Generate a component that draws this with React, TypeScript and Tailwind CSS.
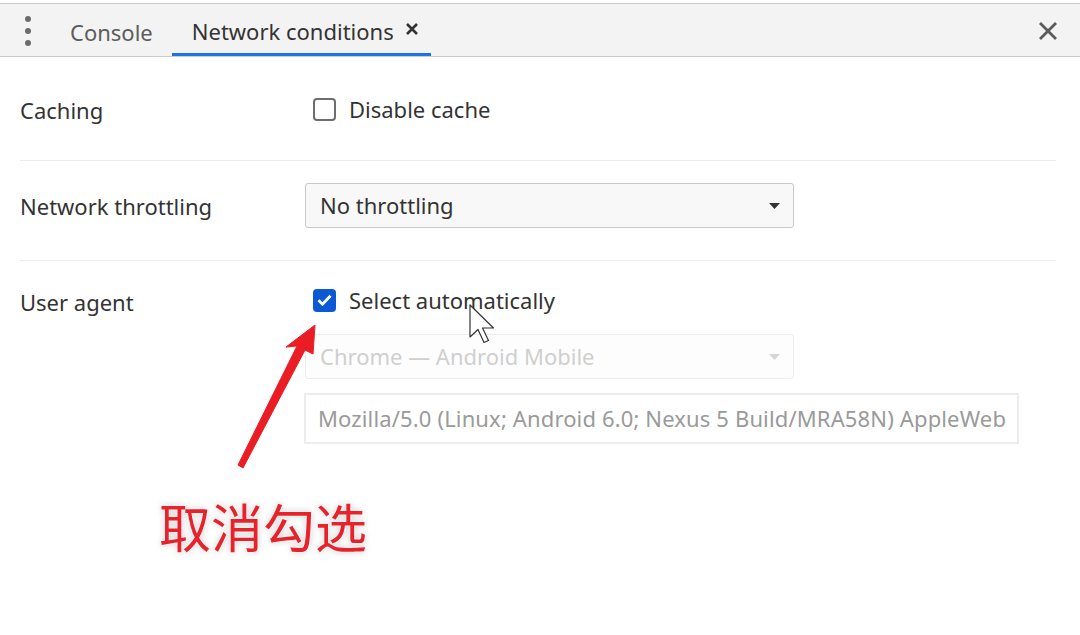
const font = "font-['Noto_Sans','Open_Sans',sans-serif]";

const Caret = ({ light }: { light?: boolean }) => (
  <svg width="11" height="6" viewBox="0 0 11 6" className={light ? 'text-[#d6d6d6]' : 'text-[#333]'}>
    <path d="M0 0h11L5.5 6z" fill="currentColor" />
  </svg>
);

const Toolbar = () => (
  <div className="mt-[3px] h-[54px] border-y border-[#cbcbcb] bg-[#f3f3f3] flex items-stretch">
    <div className="w-[56px] flex flex-col items-center justify-center gap-[6px] pt-[2px]">
      <span className="w-[6px] h-[6px] rounded-full bg-[#6b6b6b]" />
      <span className="w-[6px] h-[6px] rounded-full bg-[#6b6b6b]" />
      <span className="w-[6px] h-[6px] rounded-full bg-[#6b6b6b]" />
    </div>
    <div className="flex items-center px-[14px] pt-[4px] text-[22px] text-[#5c5c5c]">Console</div>
    <div className="ml-[5px] flex items-center gap-[11px] pl-[20px] pr-[12px] text-[22px] text-[#333] border-b-[3px] border-[#1a73e8] pt-[5px]">
      Network conditions
      <svg width="14" height="14" viewBox="0 0 14 14" className="mb-[5px]">
        <path d="M2 2l10 10M12 2L2 12" stroke="#333" strokeWidth="2.6" />
      </svg>
    </div>
    <div className="flex-1" />
    <div className="w-[64px] flex items-center justify-center pt-[2px]">
      <svg width="20" height="20" viewBox="0 0 20 20">
        <path d="M2 2l16 16M18 2L2 18" stroke="#5a5a5a" strokeWidth="2.8" />
      </svg>
    </div>
  </div>
);

const Row = ({ label, children, className }: { label: string; children: React.ReactNode; className: string }) => (
  <div className={`flex border-b border-[#ececec] ${className}`}>
    <div className="w-[285px] shrink-0 text-[22px] text-[#333] leading-[28px]">{label}</div>
    <div className="flex-1">{children}</div>
  </div>
);

export default function App() {
  return (
    <div className={`relative w-[1080px] h-[635px] bg-white overflow-hidden ${font}`}>
      <Toolbar />
      <div className="pl-[20px] pr-[24px]">
        <Row label="Caching" className="h-[104px] items-center pt-[2px]">
          <label className="flex items-center gap-[13px] pl-[8px] text-[22px] text-[#333]">
            <span className="w-[23px] h-[23px] rounded-[4px] border-2 border-[#6e6e6e] bg-white" />
            Disable cache
          </label>
        </Row>
        <Row label="Network throttling" className="h-[100px] items-center pb-[10px]">
          <div className="w-[489px] h-[45px] rounded-[3px] border border-[#c9c9c9] bg-[#f8f8f8] flex items-center justify-between pl-[14px] pr-[13px] text-[22px] text-[#333]">
            No throttling
            <Caret />
          </div>
        </Row>
        <div className="flex">
          <div className="w-[285px] shrink-0 pt-[27px] text-[22px] text-[#333] leading-[28px]">User agent</div>
          <div className="flex-1 pt-[27px]">
            <label className="flex items-center gap-[13px] pl-[8px] text-[22px] text-[#333] leading-[24px]">
              <span className="w-[23px] h-[23px] rounded-[4px] bg-[#0b5ad4] flex items-center justify-center">
                <svg width="15" height="12" viewBox="0 0 15 12">
                  <path d="M1.5 6.2l4 4L13.5 1.8" fill="none" stroke="#fff" strokeWidth="2.8" />
                </svg>
              </span>
              Select automatically
            </label>
            <div className="mt-[22px] w-[489px] h-[45px] rounded-[3px] border border-[#ededed] bg-[#fdfdfd] flex items-center justify-between pl-[14px] pr-[13px] text-[22px] text-[#cfcfcf]">
              Chrome — Android Mobile
              <Caret light />
            </div>
            <div className="mt-[14px] -ml-[1px] w-[715px] h-[51px] border-2 border-[#ececec] flex items-center pl-[12px] text-[22px] tracking-[0.14px] text-[#9a9a9a] whitespace-nowrap overflow-hidden">
              Mozilla/5.0 (Linux; Android 6.0; Nexus 5 Build/MRA58N) AppleWeb
            </div>
          </div>
        </div>
      </div>

      {/* annotation arrow + mouse pointer */}
      <svg className="absolute left-0 top-0" width="1080" height="635" viewBox="0 0 1080 635" fill="none">
        <polygon
          points="238,465 297,346 286,347 315,325 313,354 305,350 243,468"
          fill="#ea1c24"
          stroke="#ea1c24"
          strokeWidth="1"
          strokeLinejoin="round"
        />
        <path
          d="M470 305v32l8-7.5 6 13 4.5-2-6-12.5h11z"
          fill="#fff"
          stroke="#333"
          strokeWidth="1.2"
          strokeLinejoin="round"
        />
      </svg>

      <div className="absolute left-[159px] top-[492px] text-[52px] leading-[68px] font-normal text-[#e8222b] font-['Noto_Sans_CJK_SC',sans-serif] [text-shadow:0_0_2px_#fff,0_0_3px_#fff,0_0_6px_#bdbdbd]">
        取消勾选
      </div>
    </div>
  );
}
